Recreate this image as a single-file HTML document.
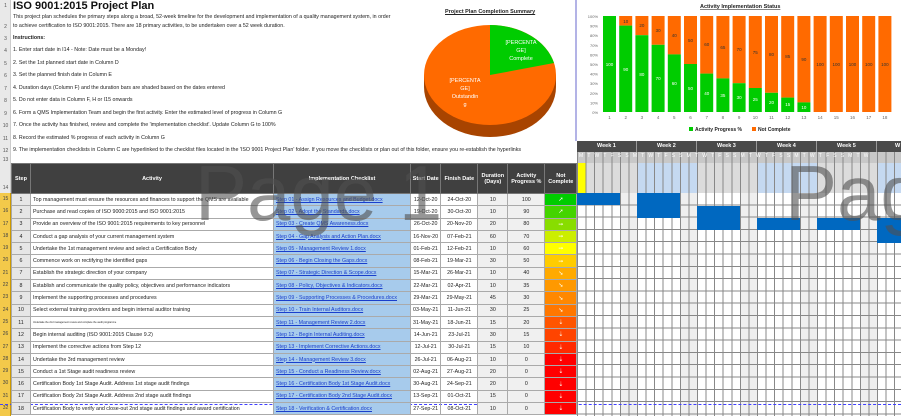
<!DOCTYPE html>
<html><head><meta charset="utf-8"><style>
*{margin:0;padding:0;box-sizing:border-box}
body{width:901px;height:416px;overflow:hidden;background:#fff;font-family:"Liberation Sans",sans-serif;position:relative}
.a{position:absolute}
.rn{position:absolute;left:0;width:11px;font-size:5px;color:#555;text-align:center}
.t{position:absolute;left:13px;font-size:5.3px;color:#222;white-space:nowrap}
table{border-collapse:collapse;position:absolute;left:11px;top:163px;table-layout:fixed}
td{border:1px solid #aaa;font-size:5.3px;height:12.3px;padding:0 2px;white-space:nowrap;overflow:hidden;color:#222}
th{background:#404040;color:#fff;font-size:5.5px;font-weight:bold;height:30px;border:1px solid #777}
td.s{background:#e6e6e6;text-align:center}
td.c{background:#a7cbec}
td.c span{color:#1a3fcc;text-decoration:underline}
td.d{text-align:center}
td.g{background:#f0f0f0;text-align:center}
td.n{text-align:center;color:#ffe;font-size:6px}
</style></head><body>
<div class="a" style="left:0;top:0;width:11px;height:193px;background:#e9e9e9;border-right:1px solid #ccc"></div>
<div class="a" style="left:0;top:193px;width:11px;height:223px;background:#f3c94a;border-right:1px solid #c90"></div>
<div class="rn" style="top:3px">1</div><div class="rn" style="top:24px">2</div><div class="rn" style="top:36px">3</div><div class="rn" style="top:48px">4</div><div class="rn" style="top:61px">5</div><div class="rn" style="top:73px">6</div><div class="rn" style="top:86px">7</div><div class="rn" style="top:98px">8</div><div class="rn" style="top:111px">9</div><div class="rn" style="top:123px">10</div><div class="rn" style="top:136px">11</div><div class="rn" style="top:148px">12</div><div class="rn" style="top:157px">13</div><div class="rn" style="top:185px">14</div>
<div class="a" style="left:0;top:193px;width:11px;font-size:5px;color:#444;text-align:center;line-height:12.3px">15<br>16<br>17<br>18<br>19<br>20<br>21<br>22<br>23<br>24<br>25<br>26<br>27<br>28<br>29<br>30<br>31<br>32</div>

<div class="a" style="left:13px;top:0;font-size:11px;font-weight:bold;color:#111">ISO 9001:2015 Project Plan</div>
<div class="t" style="top:13px;line-height:9px">This project plan schedules the primary steps along a broad, 52-week timeline for the development and implementation of a quality management system, in order<br>to achieve certification to ISO 9001:2015. There are 18 primary activities, to be undertaken over a 52 week duration.</div>
<div class="t" style="top:35px;font-weight:bold">Instructions:</div>
<div class="t" style="top:47px">1. Enter start date in I14 - Note: Date must be a Monday!</div>
<div class="t" style="top:60px">2. Set the 1st planned start date in Column D</div>
<div class="t" style="top:72px">3. Set the planned finish date in Column E</div>
<div class="t" style="top:85px">4. Duration days (Column F) and the duration bars are shaded based on the dates entered</div>
<div class="t" style="top:97px">5. Do not enter data in Column F, H or I15 onwards</div>
<div class="t" style="top:110px">6. Form a QMS Implementation Team and begin the first activity. Enter the estimated level of progress in Column G</div>
<div class="t" style="top:122px">7. Once the activity has finished, review and complete the 'implementation checklist'. Update Column G to 100%</div>
<div class="t" style="top:135px">8. Record the estimated % progress of each activity in Column G</div>
<div class="t" style="top:147px">9. The implementation checklists in Column C are hyperlinked to the checklist files located in the 'ISO 9001 Project Plan' folder. If you move the checklists or plan out of this folder, ensure you re-establish the hyperlinks</div>

<div class="a" style="left:445px;top:9px;font-size:5.5px;font-weight:bold;text-decoration:underline;color:#222">Project Plan Completion Summary</div>
<svg class="a" style="left:420px;top:20px" width="150" height="125" font-family="Liberation Sans">
<path d="M4 55 L4 67 A66 50 0 0 0 136 67 L136 55 Z" fill="#a84400"/>
<ellipse cx="70" cy="55" rx="66" ry="50" fill="#ff6a00"/>
<path d="M70 55 L70 5 A66 50 0 0 1 134 43 Z" fill="#00cc00"/>
<g font-size="5.5" fill="#fff" text-anchor="middle">
<text x="101" y="24">[PERCENTA</text><text x="101" y="32">GE]</text><text x="101" y="40">Complete</text>
<text x="45" y="62">[PERCENTA</text><text x="45" y="70">GE]</text><text x="45" y="78">Outstandin</text><text x="45" y="86">g</text>
</g>
</svg>

<div class="a" style="left:575px;top:0;width:2px;height:141px;background:#b3b3e6"></div>

<div class="a" style="left:577px;top:141px;width:324px;height:275px;background:#fff"></div>
<div class="a" style="left:577px;top:141px;width:324px;height:11px;background:repeating-linear-gradient(to right,#4a4a4a 0 59px,#999 59px 60px)"></div>
<div class="a" style="left:577px;top:152px;width:324px;height:11px;background:#c8c8c8"></div>
<div class="a" style="left:577px;top:163px;width:324px;height:30px;background:repeating-linear-gradient(to right,#dcdcdc 0 60px,#c5d9f1 60px 120px)"></div>
<div class="a" style="left:577px;top:163px;width:9px;height:30px;background:#ffff00"></div>
<div class="a" style="left:577px;top:193px;width:324px;height:223px;background:repeating-linear-gradient(to right,transparent 0 42.86px,#efefef 42.86px 60px)"></div>
<div class="a" style="left:577px;top:152px;width:324px;height:264px;background:repeating-linear-gradient(to right,#888 0 1px,transparent 1px 8.571px)"></div>
<div class="a" style="left:577px;top:193px;width:324px;height:223px;background:repeating-linear-gradient(to bottom,transparent 0 11.3px,#888 11.3px 12.3px)"></div>
<div class="a" style="left:577px;top:141px;width:324px;height:11px;font-size:5.5px;font-weight:bold;color:#fff">
<span class="a" style="left:20px;top:2px">Week 1</span><span class="a" style="left:80px;top:2px">Week 2</span><span class="a" style="left:140px;top:2px">Week 3</span><span class="a" style="left:200px;top:2px">Week 4</span><span class="a" style="left:260px;top:2px">Week 5</span><span class="a" style="left:318px;top:2px">W</span></div>
<div class="a" style="left:577px;top:153px;font-size:5px;color:#fff;letter-spacing:4.16px;white-space:nowrap;padding-left:2px">MTWTFSSMTWTFSSMTWTFSSMTWTFSSMTWTFSSMTW</div>
<div class="a" style="background:#0068c0;left:577px;top:193px;width:43px;height:12px"></div>
<div class="a" style="background:#0068c0;left:637px;top:193px;width:43px;height:25px"></div>
<div class="a" style="background:#0068c0;left:697px;top:206px;width:43px;height:24px"></div>
<div class="a" style="background:#0068c0;left:757px;top:218px;width:43px;height:12px"></div>
<div class="a" style="background:#0068c0;left:817px;top:218px;width:43px;height:12px"></div>
<div class="a" style="background:#0068c0;left:877px;top:218px;width:24px;height:25px"></div>
<div class="a" style="left:0;width:901px;border-top:1px dashed #4040ff;top:404px"></div>

<table>
<colgroup><col style="width:19px"><col style="width:243px"><col style="width:137px"><col style="width:30px"><col style="width:37px"><col style="width:30px"><col style="width:37px"><col style="width:32px"></colgroup>
<tr><th>Step</th><th>Activity</th><th>Implementation Checklist</th><th>Start Date</th><th>Finish Date</th><th>Duration (Days)</th><th>Activity Progress %</th><th>Not Complete</th></tr>
<tr><td class="s">1</td><td>Top management must ensure the resources and finances to support the QMS are available</td><td class="c"><span>Step 01 - Assign Resources and Budget.docx</span></td><td class="d">12-Oct-20</td><td class="d">24-Oct-20</td><td class="g">10</td><td class="g">100</td><td class="n" style="background:#00cc00">➚</td></tr>
<tr><td class="s">2</td><td>Purchase and read copies of ISO 9000:2015 and ISO 9001:2015</td><td class="c"><span>Step 02 - Adopt the Standards.docx</span></td><td class="d">19-Oct-20</td><td class="d">30-Oct-20</td><td class="g">10</td><td class="g">90</td><td class="n" style="background:#44d400">➚</td></tr>
<tr><td class="s">3</td><td>Provide an overview of the ISO 9001:2015 requirements to key personnel</td><td class="c"><span>Step 03 - Create QMS Awareness.docx</span></td><td class="d">26-Oct-20</td><td class="d">20-Nov-20</td><td class="g">20</td><td class="g">80</td><td class="n" style="background:#88dd00">➙</td></tr>
<tr><td class="s">4</td><td>Conduct a gap analysis of your current management system</td><td class="c"><span>Step 04 - Gap Analysis and Action Plan.docx</span></td><td class="d">16-Nov-20</td><td class="d">07-Feb-21</td><td class="g">60</td><td class="g">70</td><td class="n" style="background:#ccee00">➙</td></tr>
<tr><td class="s">5</td><td>Undertake the 1st management review and select a Certification Body</td><td class="c"><span>Step 05 - Management Review 1.docx</span></td><td class="d">01-Feb-21</td><td class="d">12-Feb-21</td><td class="g">10</td><td class="g">60</td><td class="n" style="background:#ffff00">➙</td></tr>
<tr><td class="s">6</td><td>Commence work on rectifying the identified gaps</td><td class="c"><span>Step 06 - Begin Closing the Gaps.docx</span></td><td class="d">08-Feb-21</td><td class="d">19-Mar-21</td><td class="g">30</td><td class="g">50</td><td class="n" style="background:#ffcc00">➙</td></tr>
<tr><td class="s">7</td><td>Establish the strategic direction of your company</td><td class="c"><span>Step 07 - Strategic Direction &amp; Scope.docx</span></td><td class="d">15-Mar-21</td><td class="d">26-Mar-21</td><td class="g">10</td><td class="g">40</td><td class="n" style="background:#ffaa00">➘</td></tr>
<tr><td class="s">8</td><td>Establish and communicate the quality policy, objectives and performance indicators</td><td class="c"><span>Step 08 - Policy, Objectives &amp; Indicators.docx</span></td><td class="d">22-Mar-21</td><td class="d">02-Apr-21</td><td class="g">10</td><td class="g">35</td><td class="n" style="background:#ff9900">➘</td></tr>
<tr><td class="s">9</td><td>Implement the supporting processes and procedures</td><td class="c"><span>Step 09 - Supporting Processes &amp; Procedures.docx</span></td><td class="d">29-Mar-21</td><td class="d">29-May-21</td><td class="g">45</td><td class="g">30</td><td class="n" style="background:#ff8800">➘</td></tr>
<tr><td class="s">10</td><td>Select external training providers and begin internal auditor training</td><td class="c"><span>Step 10 - Train Internal Auditors.docx</span></td><td class="d">03-May-21</td><td class="d">11-Jun-21</td><td class="g">30</td><td class="g">25</td><td class="n" style="background:#ff7700">➘</td></tr>
<tr><td class="s">11</td><td style="font-size:2.5px">Undertake the 2nd management review and complete the audit programme</td><td class="c"><span>Step 11 - Management Review 2.docx</span></td><td class="d">31-May-21</td><td class="d">18-Jun-21</td><td class="g">15</td><td class="g">20</td><td class="n" style="background:#ff5500">⇣</td></tr>
<tr><td class="s">12</td><td>Begin internal auditing (ISO 9001:2015 Clause 9.2)</td><td class="c"><span>Step 12 - Begin Internal Auditing.docx</span></td><td class="d">14-Jun-21</td><td class="d">23-Jul-21</td><td class="g">30</td><td class="g">15</td><td class="n" style="background:#ff4400">⇣</td></tr>
<tr><td class="s">13</td><td>Implement the corrective actions from Step 12</td><td class="c"><span>Step 13 - Implement Corrective Actions.docx</span></td><td class="d">12-Jul-21</td><td class="d">30-Jul-21</td><td class="g">15</td><td class="g">10</td><td class="n" style="background:#ff2a00">⇣</td></tr>
<tr><td class="s">14</td><td>Undertake the 3rd management review</td><td class="c"><span>Step 14 - Management Review 3.docx</span></td><td class="d">26-Jul-21</td><td class="d">06-Aug-21</td><td class="g">10</td><td class="g">0</td><td class="n" style="background:#ff0000">⇣</td></tr>
<tr><td class="s">15</td><td>Conduct a 1st Stage audit readiness review</td><td class="c"><span>Step 15 - Conduct a Readiness Review.docx</span></td><td class="d">02-Aug-21</td><td class="d">27-Aug-21</td><td class="g">20</td><td class="g">0</td><td class="n" style="background:#ff0000">⇣</td></tr>
<tr><td class="s">16</td><td>Certification Body 1st Stage Audit. Address 1st stage audit findings</td><td class="c"><span>Step 16 - Certification Body 1st Stage Audit.docx</span></td><td class="d">30-Aug-21</td><td class="d">24-Sep-21</td><td class="g">20</td><td class="g">0</td><td class="n" style="background:#ff0000">⇣</td></tr>
<tr><td class="s">17</td><td>Certification Body 2st Stage Audit. Address 2nd stage audit findings</td><td class="c"><span>Step 17 - Certification Body 2nd Stage Audit.docx</span></td><td class="d">13-Sep-21</td><td class="d">01-Oct-21</td><td class="g">15</td><td class="g">0</td><td class="n" style="background:#ff0000">⇣</td></tr>
<tr><td class="s">18</td><td>Certification Body to verify and close-out 2nd stage audit findings and award certification</td><td class="c"><span>Step 18 - Verification &amp; Certification.docx</span></td><td class="d">27-Sep-21</td><td class="d">08-Oct-21</td><td class="g">10</td><td class="g">0</td><td class="n" style="background:#ff0000">⇣</td></tr>
</table>

<div class="a" style="left:195px;top:148px;font-size:78px;color:rgba(80,80,80,0.6);white-space:nowrap">Page 1</div>
<div class="a" style="left:785px;top:148px;font-size:78px;color:rgba(80,80,80,0.6);white-space:nowrap">Pag</div>

<svg class="a" style="left:577px;top:0" width="324" height="141" font-family="Liberation Sans">
<text x="123" y="8" font-size="5.5" font-weight="bold" text-decoration="underline" fill="#222">Activity Implementation Status</text>
<g font-size="4" fill="#666" text-anchor="end">
<text x="21" y="18">100%</text><text x="21" y="27.6">90%</text><text x="21" y="37.2">80%</text><text x="21" y="46.8">70%</text><text x="21" y="56.4">60%</text><text x="21" y="66">50%</text><text x="21" y="75.6">40%</text><text x="21" y="85.2">30%</text><text x="21" y="94.8">20%</text><text x="21" y="104.4">10%</text><text x="21" y="114">0%</text>
</g>
<g font-size="4.5" text-anchor="middle">
<rect x="26" y="16" width="13" height="96" fill="#00cc00"/><text x="32.5" y="66" fill="#fff">100</text>
<rect x="42.2" y="16" width="13" height="9.6" fill="#ff6a00"/><rect x="42.2" y="25.6" width="13" height="86.4" fill="#00cc00"/><text x="48.7" y="23" fill="#333">10</text><text x="48.7" y="71" fill="#fff">90</text>
<rect x="58.4" y="16" width="13" height="19.2" fill="#ff6a00"/><rect x="58.4" y="35.2" width="13" height="76.8" fill="#00cc00"/><text x="64.9" y="27" fill="#333">20</text><text x="64.9" y="76" fill="#fff">80</text>
<rect x="74.6" y="16" width="13" height="28.8" fill="#ff6a00"/><rect x="74.6" y="44.8" width="13" height="67.2" fill="#00cc00"/><text x="81.1" y="32" fill="#333">30</text><text x="81.1" y="80" fill="#fff">70</text>
<rect x="90.8" y="16" width="13" height="38.4" fill="#ff6a00"/><rect x="90.8" y="54.4" width="13" height="57.6" fill="#00cc00"/><text x="97.3" y="37" fill="#333">40</text><text x="97.3" y="85" fill="#fff">60</text>
<rect x="107" y="16" width="13" height="48" fill="#ff6a00"/><rect x="107" y="64" width="13" height="48" fill="#00cc00"/><text x="113.5" y="42" fill="#333">50</text><text x="113.5" y="90" fill="#fff">50</text>
<rect x="123.2" y="16" width="13" height="57.6" fill="#ff6a00"/><rect x="123.2" y="73.6" width="13" height="38.4" fill="#00cc00"/><text x="129.7" y="46" fill="#333">60</text><text x="129.7" y="95" fill="#fff">40</text>
<rect x="139.4" y="16" width="13" height="62.4" fill="#ff6a00"/><rect x="139.4" y="78.4" width="13" height="33.6" fill="#00cc00"/><text x="145.9" y="49" fill="#333">65</text><text x="145.9" y="97" fill="#fff">35</text>
<rect x="155.6" y="16" width="13" height="67.2" fill="#ff6a00"/><rect x="155.6" y="83.2" width="13" height="28.8" fill="#00cc00"/><text x="162.1" y="51" fill="#333">70</text><text x="162.1" y="99" fill="#fff">30</text>
<rect x="171.8" y="16" width="13" height="72" fill="#ff6a00"/><rect x="171.8" y="88" width="13" height="24" fill="#00cc00"/><text x="178.3" y="54" fill="#333">75</text><text x="178.3" y="101" fill="#fff">25</text>
<rect x="188" y="16" width="13" height="76.8" fill="#ff6a00"/><rect x="188" y="92.8" width="13" height="19.2" fill="#00cc00"/><text x="194.5" y="56" fill="#333">80</text><text x="194.5" y="104" fill="#fff">20</text>
<rect x="204.2" y="16" width="13" height="81.6" fill="#ff6a00"/><rect x="204.2" y="97.6" width="13" height="14.4" fill="#00cc00"/><text x="210.7" y="58" fill="#333">85</text><text x="210.7" y="106" fill="#fff">15</text>
<rect x="220.4" y="16" width="13" height="86.4" fill="#ff6a00"/><rect x="220.4" y="102.4" width="13" height="9.6" fill="#00cc00"/><text x="226.9" y="61" fill="#333">90</text><text x="226.9" y="109" fill="#fff">10</text>
<rect x="236.6" y="16" width="13" height="96" fill="#ff6a00"/><text x="243.1" y="66" fill="#333">100</text>
<rect x="252.8" y="16" width="13" height="96" fill="#ff6a00"/><text x="259.3" y="66" fill="#333">100</text>
<rect x="269" y="16" width="13" height="96" fill="#ff6a00"/><text x="275.5" y="66" fill="#333">100</text>
<rect x="285.2" y="16" width="13" height="96" fill="#ff6a00"/><text x="291.7" y="66" fill="#333">100</text>
<rect x="301.4" y="16" width="13" height="96" fill="#ff6a00"/><text x="307.9" y="66" fill="#333">100</text>
</g>
<g font-size="4.5" fill="#666" text-anchor="middle">
<text x="32.5" y="119">1</text><text x="48.7" y="119">2</text><text x="64.9" y="119">3</text><text x="81.1" y="119">4</text><text x="97.3" y="119">5</text><text x="113.5" y="119">6</text><text x="129.7" y="119">7</text><text x="145.9" y="119">8</text><text x="162.1" y="119">9</text><text x="178.3" y="119">10</text><text x="194.5" y="119">11</text><text x="210.7" y="119">12</text><text x="226.9" y="119">13</text><text x="243.1" y="119">14</text><text x="259.3" y="119">15</text><text x="275.5" y="119">16</text><text x="291.7" y="119">17</text><text x="307.9" y="119">18</text>
</g>
<rect x="112" y="127" width="4" height="4" fill="#00cc00"/><text x="118" y="131" font-size="5" font-weight="bold" fill="#222">Activity Progress %</text>
<rect x="175" y="127" width="4" height="4" fill="#ff6a00"/><text x="181" y="131" font-size="5" font-weight="bold" fill="#222">Not Complete</text>
</svg>
</body></html>
